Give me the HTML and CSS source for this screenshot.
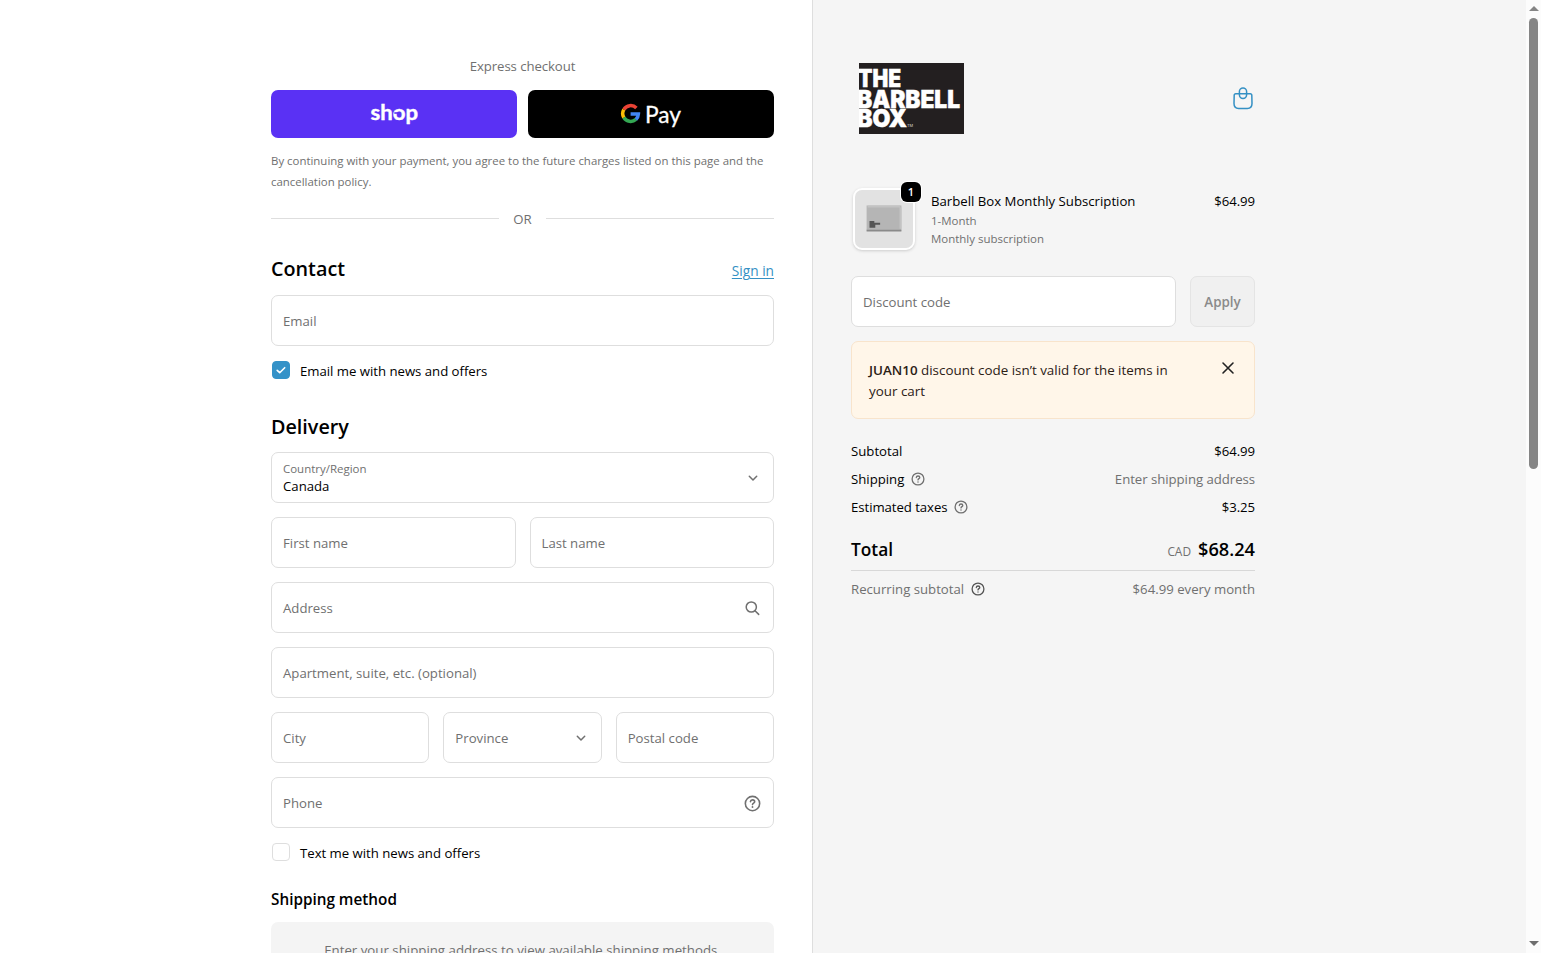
FILE: index.html
```html
<!DOCTYPE html>
<html lang="en">
<head>
<meta charset="utf-8">
<title>Checkout - The Barbell Box</title>
<link rel="stylesheet" href="styles.css">
</head>
<body>
<svg class="defs" aria-hidden="true">
  <symbol id="help" viewBox="0 0 14 14">
    <circle cx="7" cy="7" r="5.900"/>
    <path d="M5.300 5.500C5.400 4.500 6.100 4 7 4c1 0 1.800.6 1.800 1.500C8.800 6.700 7 6.600 7 7.900"/>
    <circle class="dot" cx="7" cy="9.900" r=".75"/>
  </symbol>
  <symbol id="chevron" viewBox="0 0 14 14"><path d="M3.300 5.300l3.700 3.700L10.700 5.300"/></symbol>
</svg>
<div class="page">
  <main class="main">
    <p class="express-title">Express checkout</p>
    <div class="express">
      <button class="pay shop" aria-label="Shop Pay">
        <svg width="50" height="30" viewBox="0 0 50 30"><text class="shop-text" x="1.500" y="20.500" textLength="47.500" lengthAdjust="spacingAndGlyphs">shop</text><path class="notch" d="M25.300 14h4.400"/></svg>
      </button>
      <button class="pay gpay" aria-label="Google Pay">
        <svg width="62" height="32" viewBox="0 0 62 32">
          <g fill="none" stroke-width="3.500">
            <path stroke="#ea4335" d="M3.800 11.500A8 8 0 0 1 16.400 10"/>
            <path stroke="#fbbc04" d="M3.800 11.500A8 8 0 0 0 3.800 19.500"/>
            <path stroke="#34a853" d="M3.800 19.500A8 8 0 0 0 15.900 21.400"/>
            <path stroke="#4285f4" d="M10.600 15.900H18.400A8 8 0 0 1 15.900 21.400"/>
          </g>
          <text class="gpay-text" x="25" y="24.500" textLength="36" lengthAdjust="spacingAndGlyphs">Pay</text>
        </svg>
      </button>
    </div>
    <p class="terms">By continuing with your payment, you agree to the future charges listed on this page and the<br>cancellation policy.</p>
    <div class="or"><span>OR</span></div>
    <div class="heading"><h2>Contact</h2><a class="link">Sign in</a></div>
    <div class="field"><span>Email</span></div>
    <div class="check-row"><span class="box checked"><svg width="12" height="12" viewBox="0 0 12 12"><path d="M2.200 6.300l2.500 2.400 5-5"/></svg></span><span>Email me with news and offers</span></div>
    <h2 class="delivery">Delivery</h2>
    <div class="form">
      <div class="field select"><div class="stack"><small>Country/Region</small><span>Canada</span></div><svg class="icon" width="14" height="14"><use href="#chevron"/></svg></div>
      <div class="row two"><div class="field"><span>First name</span></div><div class="field"><span>Last name</span></div></div>
      <div class="field"><span>Address</span><svg class="icon" width="16" height="16" viewBox="0 0 16 16"><circle cx="7.300" cy="7" r="5.100"/><path d="M11 10.700l3.700 3.700"/></svg></div>
      <div class="field"><span>Apartment, suite, etc. (optional)</span></div>
      <div class="row three"><div class="field"><span>City</span></div><div class="field select"><span>Province</span><svg class="icon" width="14" height="14"><use href="#chevron"/></svg></div><div class="field"><span>Postal code</span></div></div>
      <div class="field"><span>Phone</span><svg class="icon help" width="17" height="17"><use href="#help"/></svg></div>
    </div>
    <div class="check-row text-me"><span class="box"></span><span>Text me with news and offers</span></div>
    <h3>Shipping method</h3>
    <div class="methods">Enter your shipping address to view available shipping methods.</div>
  </main>
  <aside class="side">
    <header class="brand">
      <svg class="logo" width="105" height="71" viewBox="0 0 105 71" role="img">
        <rect width="105" height="71" fill="#231f20"/>
        <text x="-1" y="24" textLength="43" lengthAdjust="spacingAndGlyphs">THE</text>
        <text x="-2" y="44.500" textLength="103" lengthAdjust="spacingAndGlyphs">BARBELL</text>
        <text x="-2" y="64" textLength="50" lengthAdjust="spacingAndGlyphs">BOX</text>
        <text class="tm" x="48" y="64" textLength="6" lengthAdjust="spacingAndGlyphs">TM</text>
      </svg>
      <svg class="bag" width="20" height="23" viewBox="0 0 20 23"><path d="M2.700 6.700h14.600a1.500 1.500 0 0 1 1.500 1.600l.2 8.200c0 3-1.700 4.900-4.600 4.900H5.600c-2.900 0-4.600-1.900-4.600-4.900l.2-8.200a1.500 1.500 0 0 1 1.500-1.600z"/><rect x="6.400" y="1" width="7.200" height="10.400" rx="3.600"/></svg>
    </header>
    <section class="item">
      <div class="thumb">
        <svg width="58" height="58" viewBox="0 0 60 60"><rect width="60" height="60" fill="#e2e2e2"/><path d="M12 16h36v26H12z" fill="#b5b5b5"/><path d="M13 16h34v2H13zM46 18h2v22h-2z" fill="#c3c3c3"/><path d="M12 41h36v2H12z" fill="#8a8a8a"/><path d="M15 32h5v2h6v2h-5v3h-6z" fill="#555"/></svg>
        <span class="badge">1</span>
      </div>
      <div class="item-info"><span>Barbell Box Monthly Subscription</span><small>1-Month</small><small>Monthly subscription</small></div>
      <span class="item-price price">$64.99</span>
    </section>
    <div class="discount"><div class="field"><span>Discount code</span></div><button class="apply">Apply</button></div>
    <div class="notice"><p><b>JUAN10</b> discount code isn’t valid for the items in<br>your cart</p><svg class="close" width="14" height="14" viewBox="0 0 14 14"><path d="M2 2l10 10M12 2L2 12"/></svg></div>
    <div class="totals">
      <div class="line"><span>Subtotal</span><span class="price">$64.99</span></div>
      <div class="line"><span class="label"><span>Shipping</span><svg class="icon help" width="14" height="14"><use href="#help"/></svg></span><span class="muted">Enter shipping address</span></div>
      <div class="line"><span class="label"><span class="tight">Estimated taxes</span><svg class="icon help" width="14" height="14"><use href="#help"/></svg></span><span class="price">$3.25</span></div>
    </div>
    <div class="total"><strong>Total</strong><span class="amount"><small>CAD</small><strong>$68.24</strong></span></div>
    <div class="line recurring"><span class="label"><span>Recurring subtotal</span><svg class="icon help dark" width="14" height="14"><use href="#help"/></svg></span><span>$64.99 every month</span></div>
  </aside>
  <div class="scrollbar"><i class="up"></i><i class="thumb-bar"></i><i class="down"></i></div>
</div>
</body>
</html>
```
FILE: styles.css
```css
* { box-sizing: border-box; }
body { margin: 0; color: #000; font: 13.200px/21px "Open Sans", "Noto Sans", sans-serif; background: #fff; }
p, h2, h3 { margin: 0; }
small { font-size: 11.480px; color: #707070; line-height: 18px; }
span, small, h2, h3, strong, a { white-space: nowrap; }
.defs { position: absolute; width: 0; height: 0; }
.page { display: flex; width: 1541px; height: 953px; overflow: hidden; }
.main { width: 813px; flex: none; padding: 56px 38px 0 271px; border-right: 1px solid #dedede; }
.side { width: 713px; flex: none; padding: 63px 271px 0 38px; background: #f5f5f5; }

/* Express checkout */
.express-title { text-align: center; color: #707070; height: 34px; letter-spacing: -.08px; }
.express { display: grid; grid-template-columns: 1fr 1fr; gap: 11px; height: 48px; }
.pay { border: 0; padding: 0; border-radius: 7px; display: flex; align-items: center; justify-content: center; }
.shop { background: #5a31f4; }
.gpay { background: #000; }
.shop-text { font: 700 20px "Lato", sans-serif; fill: #fff; stroke: #fff; stroke-width: .4; }
.notch { stroke: #5a31f4; stroke-width: 1.600; }
.gpay-text { font: 400 22.500px "Lato", sans-serif; fill: #fff; stroke: #fff; stroke-width: .3; }
.terms { margin-top: 12px; height: 59px; font-size: 11.430px; color: #707070; }
.or { display: flex; align-items: center; gap: 14px; height: 21px; color: #707070; }
.or::before, .or::after { content: ""; flex: 1; height: 1px; margin-top: -2px; background: #dedede; }
.heading { display: flex; justify-content: space-between; align-items: baseline; margin-top: 26px; height: 39px; }
h2 { font-size: 19.750px; font-weight: 600; line-height: 26px; }
.link { color: #3490c4; font-size: 13.700px; text-decoration: underline; text-underline-offset: 2px; }

/* Form */
.field { display: flex; align-items: center; justify-content: space-between; height: 51px; padding: 1px 13px 0 11px; background: #fff; border: 1px solid #dedede; border-radius: 7px; color: #707070; min-width: 0; }
.icon { flex: none; fill: none; stroke: #707070; stroke-width: 1.500; stroke-linecap: round; stroke-linejoin: round; }
.icon.help { stroke-width: 1.300; }
.icon.dark { stroke: #555; }
.dot { fill: #707070; stroke: none; }
.field .help { margin-right: -1px; }
.select { padding-top: 0; }
.row .select span { padding-top: 1px; }
.stack { display: flex; flex-direction: column; color: #000; padding-top: 2px; }
.stack small { line-height: 15px; }
.stack span { line-height: 20px; }
.check-row { display: flex; gap: 10px; margin-top: 15px; height: 20px; padding-left: 1px; letter-spacing: -.02px; }
.box { width: 18px; height: 18px; border: 1px solid #dedede; border-radius: 4px; display: flex; align-items: center; justify-content: center; }
.checked { background: #3492c8; border-color: #3492c8; }
.checked svg { fill: none; stroke: #fff; stroke-width: 1.600; stroke-linecap: round; stroke-linejoin: round; }
.delivery { margin: 33px 0 12px; }
.form { display: flex; flex-direction: column; gap: 14px; }
.row { display: grid; gap: 14px; }
.two { grid-template-columns: 1fr 1fr; }
.three { grid-template-columns: 1fr 1fr 1fr; }
h3 { font-size: 15.300px; font-weight: 600; line-height: 22px; margin: 25px 0 12px; }
.methods { background: #f4f4f4; border-radius: 7px; height: 60px; padding-top: 18px; text-align: center; color: #707070; font-size: 13.280px; }

/* Order summary */
.brand { display: flex; justify-content: space-between; align-items: center; height: 71px; padding: 0 2px 0 8px; }
.logo text { font: 900 24px "Inter", sans-serif; fill: #fff; stroke: #fff; stroke-width: .5; }
.logo .tm { font-size: 4px; font-weight: 400; stroke: none; fill: #ddd; }
.bag { fill: none; stroke: #3490c4; stroke-width: 1.500; }
.item { display: flex; height: 64px; margin-top: 53px; }
.thumb { position: relative; width: 62px; height: 62px; margin: 1px 16px 0 2px; border: 2px solid #fff; border-radius: 9px; box-shadow: 0 1px 3px #ccc; background: #fff; }
.thumb svg { display: block; border-radius: 7px; }
.badge { position: absolute; top: -8px; right: -8px; width: 20px; height: 20px; border-radius: 6px; background: #000; color: #fff; text-align: center; font-size: 11px; line-height: 20px; font-weight: 600; box-shadow: 0 0 0 1px #fff; }
.item-info { display: flex; flex-direction: column; align-items: flex-start; flex: 1; padding-top: 4px; }
.item-price { padding-top: 4px; }
.price { letter-spacing: -.08px; }
.discount { display: grid; grid-template-columns: 325px 65px; gap: 14px; margin-top: 25px; }
.apply { font: 600 13.400px "Open Sans", sans-serif; color: #8a8a8a; background: #f0f0f0; border: 1px solid #e4e4e4; border-radius: 7px; padding: 0; }
.notice { display: flex; justify-content: space-between; align-items: flex-start; height: 78px; margin-top: 14px; padding: 18px 19px 0 17px; color: #2b2015; background: #fff6e9; border: 1px solid #f8e4cc; border-radius: 7px; font-size: 13.380px; }
.notice b { font-weight: 600; }
.close { fill: none; stroke: #222; stroke-width: 1.600; stroke-linecap: round; margin-top: 1px; }
.totals { display: flex; flex-direction: column; gap: 7px; margin-top: 22px; }
.line { display: flex; justify-content: space-between; height: 21px; }
.label { display: flex; align-items: center; gap: 6.500px; }
.label .help { margin-top: -1px; }
.tight { letter-spacing: -.06px; }
.muted, .recurring { color: #707070; }
.muted { letter-spacing: -.04px; }
.total { display: flex; justify-content: space-between; align-items: baseline; height: 36px; margin-top: 17px; border-bottom: 1px solid #d8d8d8; line-height: 28px; }
.total strong { font-size: 17.300px; font-weight: 600; }
.total .amount strong { font-size: 18.200px; }
.total small { font-size: 11.900px; }
.amount { display: flex; align-items: baseline; gap: 7px; }
.recurring { margin-top: 8px; }

.scrollbar { width: 15px; flex: none; display: flex; flex-direction: column; align-items: center; background: #fcfcfc; }
.up { border: 5px solid transparent; border-top: 0; border-bottom: 5px solid #858585; margin-top: 6px; }
.thumb-bar { width: 9px; height: 451px; margin-top: 7px; border-radius: 5px; background: #858585; }
.down { border: 5px solid transparent; border-bottom: 0; border-top: 5px solid #6e6e6e; margin-top: auto; margin-bottom: 7px; }
```
